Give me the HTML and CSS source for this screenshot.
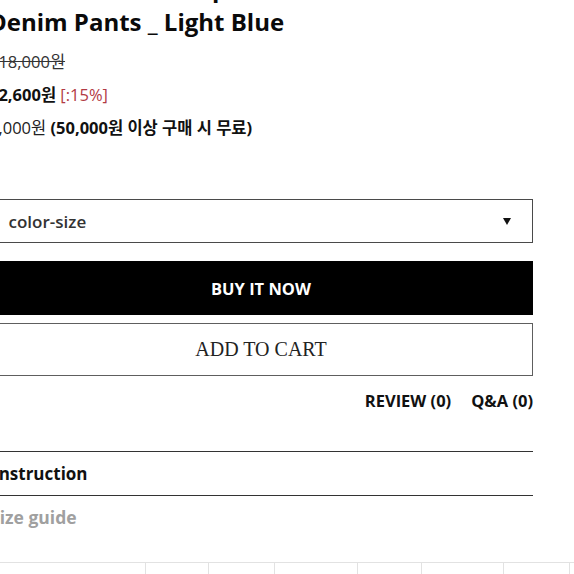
FILE: index.html
```html
<!DOCTYPE html>
<html lang="ko">
<head>
<meta charset="utf-8">
<link rel="stylesheet" href="styles.css">
</head>
<body>
<div class="page">
  <h1 class="title">Bleached Wide Crop<br>Denim Pants _ Light Blue</h1>
  <div class="price-row old">118,000원</div>
  <div class="price-row sale"><b>12,600원</b> <span class="rate">[:15%]</span></div>
  <div class="price-row ship">3,000원 <b>(50,000원 이상 구매 시 무료)</b></div>

  <div class="select">
    <span class="select-label">color-size</span>
    <span class="select-arrow"></span>
  </div>

  <div class="btn buy">BUY IT NOW</div>
  <div class="btn cart">ADD TO CART</div>

  <div class="links">
    <span>REVIEW (0)</span>
    <span>Q&amp;A (0)</span>
  </div>

  <div class="tab active">Instruction</div>
  <div class="tab muted">Size guide</div>

  <div class="size-table">
    <div class="cell">사이즈 (cm)</div>
    <div class="cell">총장</div>
    <div class="cell">허리</div>
    <div class="cell">엉덩이</div>
    <div class="cell">허벅지</div>
    <div class="cell">밑위</div>
    <div class="cell">밑단</div>
    <div class="cell"></div>
  </div>
</div>
</body>
</html>
```

FILE: styles.css
```css
html, body {
  margin: 0;
  padding: 0;
  background: #fff;
  overflow: hidden;
}
body {
  width: 574px;
  height: 574px;
  font-family: "Open Sans", "Noto Sans CJK KR", sans-serif;
  color: #111;
}
.page {
  margin-left: -11px;
  width: 544px;
}
.title {
  margin: -29px 0 0 0;
  font-size: 24px;
  line-height: 34px;
  font-weight: 700;
  color: #0a0a0a;
}
.price-row {
  font-size: 16.5px;
  line-height: 33px;
  color: #222;
}
.price-row.old {
  margin-top: 6px;
  text-decoration: line-through;
  color: #333;
}
.price-row b {
  font-weight: 700;
  color: #111;
}
.rate {
  color: #b23a44;
}
.select {
  margin-top: 55px;
  height: 44px;
  box-sizing: border-box;
  border: 1.5px solid #4a4a4a;
  display: flex;
  align-items: center;
  justify-content: space-between;
  padding: 0 21px 0 18.5px;
}
.select-label {
  font-size: 17px;
  font-weight: 600;
  color: #333;
}
.select-arrow {
  width: 0;
  height: 0;
  border-left: 4px solid transparent;
  border-right: 4px solid transparent;
  border-top: 7px solid #111;
}
.btn {
  display: flex;
  align-items: center;
  justify-content: center;
  box-sizing: border-box;
}
.buy {
  margin-top: 18px;
  height: 54px;
  background: #000;
  color: #fff;
  font-size: 16.5px;
  font-weight: 700;
}
.cart {
  margin-top: 8px;
  height: 53px;
  border: 1.5px solid #5e5e5e;
  font-family: "Liberation Serif", serif;
  font-size: 20px;
  color: #222;
}
.links {
  margin-top: 14.5px;
  display: flex;
  justify-content: flex-end;
  gap: 20px;
  font-size: 16.5px;
  line-height: 20px;
  font-weight: 700;
  color: #111;
}
.tab {
  font-size: 17px;
  line-height: 43px;
  font-weight: 700;
  padding-left: 4px;
}
.tab.active {
  margin-top: 40.5px;
  border-top: 1px solid #333;
  border-bottom: 1px solid #333;
  color: #111;
}
.tab.muted {
  padding-left: 1px;
  font-size: 17.5px;
  color: #a0a0a0;
}
.size-table {
  margin-top: 23px;
  width: 600px;
  display: grid;
  grid-template-columns: 156px 63px 66px 83px 64px 82px 66px 20px;
  border-top: 1px solid #e2e2e2;
}
.cell {
  border-left: 1px solid #e2e2e2;
  height: 40px;
  padding-top: 8px;
  box-sizing: border-box;
  text-align: center;
  font-size: 13px;
  color: #555;
}
.cell:first-child {
  border-left: none;
  text-align: right;
  padding-right: 14px;
}
```
